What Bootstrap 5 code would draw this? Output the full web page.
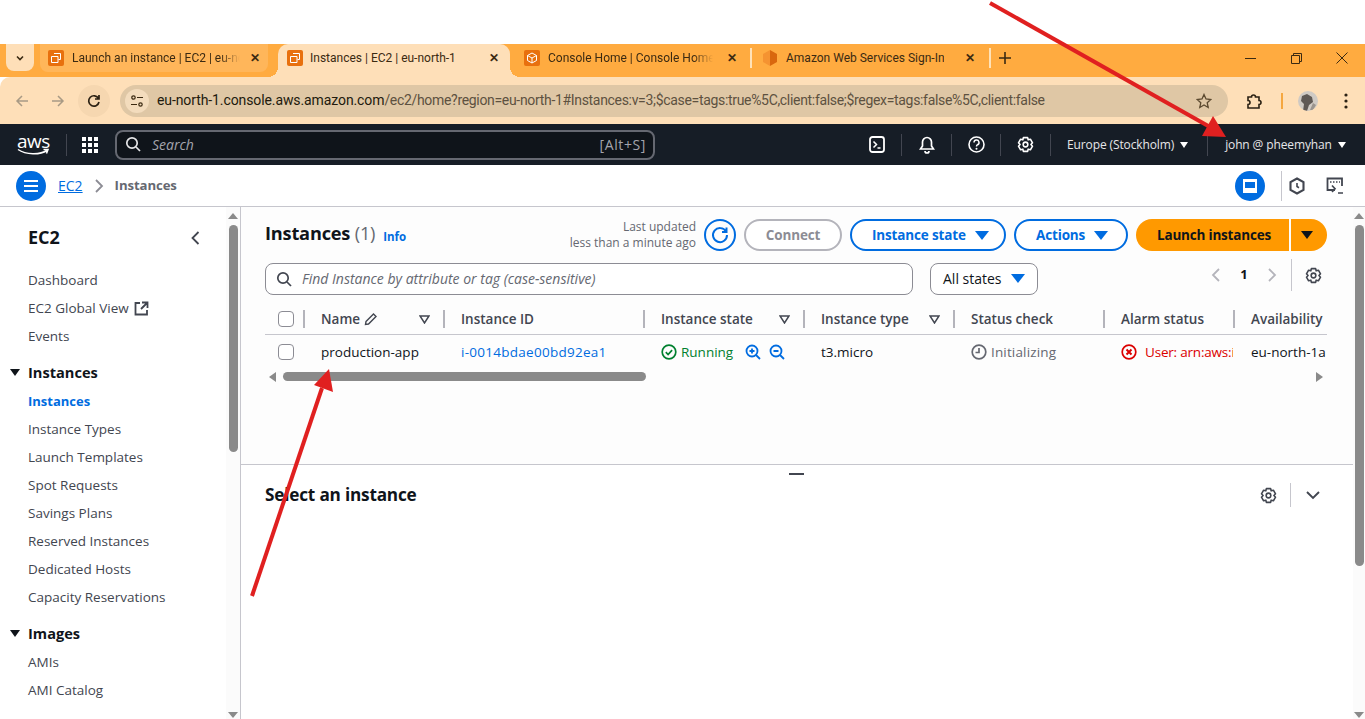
<!DOCTYPE html>
<html lang="en">
<head>
  <meta charset="UTF-8" />
  <title>Instances | EC2 | eu-north-1</title>
  <meta name="viewport" content="width=device-width, initial-scale=1.0">
  <link href="https://cdn.jsdelivr.net/npm/bootstrap@5.3.0/dist/css/bootstrap.min.css" rel="stylesheet">
  <style>
    html, body { height: 719px; overflow: hidden; }
    body { background: #fff; font-family: "Open Sans", "Liberation Sans", sans-serif; font-size: 14px; color: #0f141a; position: relative; }
    svg { display: block; flex: none; }
    .top-gap { height: 44px; background: #fff; }

    /* browser chrome */
    .tab-strip { height: 33px; background: #ffab40; font-family: Roboto, "Liberation Sans", sans-serif; font-size: 12px; color: #3b2a12; }
    .tab-menu { width: 28px; height: 27px; margin-left: 6px; margin-right: 6px; background: #fedfb8; border-radius: 0 0 8px 8px; }
    .tab-item { height: 33px; padding-bottom: 5px; white-space: nowrap; }
    .tab-hover { width: 228px; height: 28px; padding-left: 8px; padding-bottom: 0; background: #ffb65a; border-radius: 0 0 8px 8px; }
    .tab-active { position: relative; width: 232px; margin-left: 10px; padding-left: 9px; background: #fedfb8; border-radius: 10px 10px 0 0; }
    .tab-active::before, .tab-active::after { content: ""; position: absolute; bottom: 0; width: 10px; height: 10px; }
    .tab-active::before { left: -10px; background: radial-gradient(circle at 0 0, transparent 10px, #fedfb8 10px); }
    .tab-active::after { right: -10px; background: radial-gradient(circle at 100% 0, transparent 10px, #fedfb8 10px); }
    .tab-third { margin-left: 14px; }
    .tab-title { overflow: hidden; margin-left: 8px; }
    .tab-t1 { width: 168px; -webkit-mask-image: linear-gradient(to right, #000 88%, transparent); mask-image: linear-gradient(to right, #000 88%, transparent); }
    .tab-t2 { width: 162px; margin-left: 7px; }
    .tab-t3 { width: 165px; -webkit-mask-image: linear-gradient(to right, #000 88%, transparent); mask-image: linear-gradient(to right, #000 88%, transparent); }
    .tab-t4 { width: 158px; }
    .tab-fav { width: 16px; height: 16px; background: #e8700e; border-radius: 2px; }
    .tab-x { width: 14px; font-size: 12px; font-weight: 700; text-align: center; }
    .tab-x-a { margin-left: 8px; }
    .tab-x-b { margin-left: auto; margin-right: 9px; }
    .tab-x-c { margin-left: 12px; }
    .tab-x-d { margin-left: 19px; }
    .tab-sep { width: 2px; height: 20px; background: #ffe2b8; }
    .tab-sep-a { margin-left: 11px; }
    .tab-sep-b { margin-left: 12px; }
    .tab-cube { margin-left: 10px; }
    .tab-plus { margin-left: 8px; }
    .win-btn { width: 46px; }
    .toolbar { height: 47px; background: #fedfb8; color: #5c4a30; border-radius: 10px 0 0 0; padding-left: 6px; }
    .tool-btn { width: 32px; height: 32px; border-radius: 50%; }
    .tool-fwd { margin-left: 4px; }
    .tool-btn-on { background: #f6d7b0; margin-left: 4px; }
    .omnibox { width: 1108px; height: 32px; margin-left: 10px; background: #dfc7a5; border-radius: 16px; font-family: Roboto, "Liberation Sans", sans-serif; font-size: 14px; color: #5d5140; white-space: nowrap; letter-spacing: -0.32px; }
    .omni-ic { width: 24px; height: 24px; margin-left: 5px; margin-right: 8px; background: #f3dcbd; border-radius: 50%; }
    .omni-host { color: #221a0d; letter-spacing: -0.1px; }
    .tool-puzzle { margin-left: 17px; }
    .tool-sep { width: 2px; height: 16px; margin-left: 18px; background: #f5a740; }
    .avatar { width: 20px; height: 20px; margin-left: 15px; border-radius: 50%; overflow: hidden; }
    .tool-dots { margin-left: 26px; }

    /* aws nav */
    .aws-bar { height: 41px; background: #161d26; color: #fff; font-size: 12px; }
    .aws-logo { width: 32px; margin-left: 17px; margin-right: 17px; color: #fff; }
    .aws-word { font-size: 19px; line-height: 16px; letter-spacing: -0.5px; height: 15px; text-align: center; }
    .bar-sep { width: 1px; height: 22px; background: #424650; }
    .aws-grid { margin-left: 15px; margin-right: 17px; }
    .aws-search { width: 540px; height: 30px; background: #0f141a; border: 2px solid #656871; border-radius: 8px; color: #a4a4ad; font-size: 14px; padding: 0 7px 1px 8px; }
    .aws-search i { margin-left: 11px; }
    .alt-key { letter-spacing: .6px; }
    .bar-tools { margin-left: 197px; }
    .bar-ic { width: 49px; }
    .bar-ic-s { width: 48px; }
    .bar-txt { color: #e6e6e8; white-space: nowrap; letter-spacing: -0.12px; }
    .bar-region { margin-left: 16px; }
    .bar-user { margin-left: 17px; }
    .caret { display: inline-block; width: 0; height: 0; border-left: 4px solid transparent; border-right: 4px solid transparent; border-top: 6px solid currentColor; }
    .caret-a { margin-left: 6px; }
    .bar-sep-a { margin-left: 19px; }

    /* breadcrumb */
    .crumb-bar { height: 42px; border-bottom: 1px solid #c6c6cd; background: #fff; padding-left: 16px; }
    .round-btn { width: 30px; height: 30px; background: #006ce0; border-radius: 50%; }
    .crumb-link { margin-left: 12px; color: #006ce0; text-decoration: underline; font-size: 14px; }
    .crumb-chev { margin-left: 10px; margin-right: 10px; }
    .crumb-now { color: #656871; font-weight: 700; font-size: 13.2px; padding-top: 1px; letter-spacing: -0.1px; }
    .crumb-sep { width: 1px; height: 30px; background: #c6c6cd; margin-left: 16px; }
    .crumb-right { margin-right: 21px; }
    .crumb-hex { margin-left: 7px; }
    .crumb-term { margin-left: 21px; }

    /* sidebar */
    .layout { height: 512px; }
    .side-wrap { width: 241px; border-right: 1px solid #c6c6cd; background: #fff; }
    .side-nav { width: 226px; padding-left: 28px; overflow: hidden; }
    .side-title { height: 59px; padding-top: 2px; font-size: 18px; font-weight: 700; }
    .side-title svg { margin-left: auto; margin-right: 26px; }
    .side-link { height: 28px; line-height: 28px; color: #424650; font-size: 13.5px; white-space: nowrap; }
    .side-link svg { margin-left: 5px; }
    .side-on { color: #006ce0; font-weight: 700; font-size: 13px; }
    .side-head { position: relative; margin-top: 8px; height: 29px; line-height: 28px; font-size: 14.6px; font-weight: 700; }
    .side-head .caret { position: absolute; left: -18px; top: 11px; border-left-width: 5px; border-right-width: 5px; border-top-width: 7px; color: #0f141a; }
    .scroll-col { width: 14px; background: #fbfbfb; padding-top: 6px; }
    .scroll-up, .scroll-down { width: 0; height: 0; margin: 0 auto; border-left: 5px solid transparent; border-right: 5px solid transparent; }
    .scroll-up { border-bottom: 6px solid #8a8a8a; }
    .scroll-down { margin-top: auto; margin-bottom: 1px; border-top: 6px solid #8a8a8a; }
    .thumb-a, .thumb-b { width: 9px; margin: 6px auto 0; background: #8a8a8a; border-radius: 5px; }
    .thumb-a { height: 227px; }
    .thumb-b { height: 341px; }
    .main-col { width: 1112px; }

    /* instances panel */
    .pane-top { height: 258px; background: #fdfdfd; border-bottom: 1px solid #c6c6cd; padding: 12px 26px 0 24px; }
    .head-row { height: 32px; }
    .pane-title { font-size: 18.2px; font-weight: 700; margin: 0 0 2px; letter-spacing: -0.2px; }
    .pane-count { color: #656871; font-weight: 400; }
    .info-link { color: #006ce0; font-size: 11.5px; font-weight: 700; margin-left: 8px; margin-top: 4px; }
    .updated { font-size: 12px; line-height: 16px; color: #656871; text-align: right; margin-right: 8px; }
    .pill { height: 32px; border: 2px solid #006ce0; border-radius: 16px; color: #006ce0; background: #fff; font-weight: 700; font-size: 13.5px; padding: 0 20px; letter-spacing: -0.15px; white-space: nowrap; }
    .pill .caret { margin-left: 9px; border-left-width: 7px; border-right-width: 7px; border-top-width: 9px; }
    .pill-off { width: 98px; border-color: #b4b4bb; color: #8c8c94; margin-left: 8px; justify-content: center; }
    .pill-state { width: 156px; margin-left: 8px; }
    .pill-act { width: 114px; margin-left: 8px; }
    .refresh { width: 32px; height: 32px; border: 2px solid #006ce0; border-radius: 50%; }
    .launch { width: 153px; height: 32px; margin-left: 8px; padding-left: 3px; background: #ff9900; border-radius: 16px 0 0 16px; color: #0f141a; font-weight: 700; font-size: 13.5px; letter-spacing: -0.2px; }
    .launch-drop { width: 36px; height: 32px; margin-left: 2px; background: #ff9900; border-radius: 0 16px 16px 0; color: #0f141a; }
    .launch-drop .caret { border-left-width: 6px; border-right-width: 6px; border-top-width: 8px; margin-right: 4px; }
    .filter-row { margin-top: 12px; height: 32px; }
    .find-box { width: 648px; height: 32px; border: 1px solid #8c8c94; border-radius: 8px; background: #fff; padding-left: 10px; padding-bottom: 1px; color: #656871; font-style: italic; font-size: 14px; }
    .find-box span { margin-left: 10px; }
    .state-box { width: 108px; height: 32px; margin-left: 17px; border: 1px solid #8c8c94; border-radius: 8px; background: #fff; color: #0f141a; padding-left: 12px; padding-bottom: 1px; }
    .state-box .caret { margin-left: 9px; color: #006ce0; border-left-width: 7px; border-right-width: 7px; border-top-width: 9px; }
    .pager { margin-left: auto; height: 32px; margin-top: -8px; padding-right: 5px; }
    .pager-num { font-weight: 700; width: 36px; text-align: center; font-size: 13px; }
    .pager-sep { width: 1px; height: 32px; background: #c6c6cd; margin-left: 13px; margin-right: 13px; }

    /* instance rows */
    .ins-table { width: 1062px; table-layout: fixed; border-collapse: collapse; margin-top: 10px; }
    .ins-table th { height: 29px; border-bottom: 1px solid #c6c6cd; font-weight: 600; color: #424650; font-size: 13.5px; padding: 0; white-space: nowrap; overflow: hidden; }
    .ins-table td { height: 36px; padding: 0; white-space: nowrap; overflow: hidden; font-size: 13.5px; }
    .cell-in { height: 18px; padding-left: 16px; border-left: 2px solid #b4b4bb; }
    .cell-td { padding-left: 18px; }
    .tick { width: 16px; height: 16px; border: 1px solid #8c8c94; border-radius: 4px; background: #fff; margin-left: 13px; }
    .th-filter { margin-left: auto; margin-right: 13px; }
    .id-link { color: #006ce0; letter-spacing: .27px; }
    .ok { color: #00802f; }
    .dim { color: #656871; letter-spacing: .15px; }
    .bad { color: #db0000; }
    .zoom-a { margin-left: 12px; }
    .zoom-b { margin-left: 8px; }
    .clip-alarm { display: block; overflow: hidden; width: 88px; letter-spacing: -0.2px; }
    .hscroll { height: 9px; margin-top: 2px; }
    .hscroll-thumb { width: 363px; height: 9px; background: #8a8a8a; border-radius: 5px; margin-left: 7px; }
    .hscroll-l { width: 0; height: 0; margin-left: 4px; border-top: 5px solid transparent; border-bottom: 5px solid transparent; border-right: 7px solid #8a8a8a; }
    .hscroll-r { width: 0; height: 0; margin-left: auto; margin-right: 4px; border-top: 5px solid transparent; border-bottom: 5px solid transparent; border-left: 7px solid #8a8a8a; }

    /* lower panel */
    .pane-low { position: relative; padding: 18px 33px 0 24px; background: #fff; }
    .drag-dash { position: absolute; top: 8px; left: 548px; width: 15px; height: 2px; background: #424650; }
    .low-title { font-size: 17.2px; font-weight: 700; margin: 0; letter-spacing: -0.2px; }
    .low-sep { width: 1px; height: 24px; background: #c6c6cd; margin: 0 15px 0 13px; }

    /* red arrows from the screenshot */
    .mark-up { position: absolute; left: 0; top: 0; pointer-events: none; }
  </style>
</head>
<body>
  <div class="top-gap"></div>

  <div class="tab-strip d-flex">
    <div class="tab-menu d-flex align-items-center justify-content-center">
      <svg width="10" height="10" viewBox="0 0 10 10"><path d="M2 3.500 5 6.500 8 3.500" fill="none" stroke="#3b2a12" stroke-width="1.600"/></svg>
    </div>
    <div class="tab-item tab-hover d-flex align-items-center">
      <span class="tab-fav d-flex align-items-center justify-content-center"><svg width="12" height="12" viewBox="0 0 12 12"><path d="M4 1.500h6.500v6h-2M1.500 4.500h6.500v6h-6.500z" fill="none" stroke="#fff" stroke-width="1"/></svg></span>
      <span class="tab-title tab-t1">Launch an instance | EC2 | eu-north-1</span>
      <span class="tab-x tab-x-a">✕</span>
    </div>
    <div class="tab-item tab-active d-flex align-items-center">
      <span class="tab-fav d-flex align-items-center justify-content-center"><svg width="12" height="12" viewBox="0 0 12 12"><path d="M4 1.500h6.500v6h-2M1.500 4.500h6.500v6h-6.500z" fill="none" stroke="#fff" stroke-width="1"/></svg></span>
      <span class="tab-title tab-t2">Instances | EC2 | eu-north-1</span>
      <span class="tab-x tab-x-b">✕</span>
    </div>
    <div class="tab-item tab-third d-flex align-items-center">
      <span class="tab-fav d-flex align-items-center justify-content-center"><svg width="12" height="12" viewBox="0 0 12 12"><path d="M6 1 10.500 3.500v5L6 11 1.500 8.500v-5zM1.500 3.500 6 6l4.500-2.500M6 6v5" fill="none" stroke="#fff" stroke-width="1"/></svg></span>
      <span class="tab-title tab-t3">Console Home | Console Home</span>
      <span class="tab-x tab-x-c">✕</span>
    </div>
    <div class="tab-item d-flex align-items-center">
      <span class="tab-sep tab-sep-a"></span>
      <svg class="tab-cube" width="16" height="18" viewBox="0 0 16 18"><path d="M8 1 15 5v8l-7 4z" fill="#d9670e"/><path d="M8 1 1 5v8l7 4z" fill="#f59331"/></svg>
      <span class="tab-title tab-t4">Amazon Web Services Sign-In</span>
      <span class="tab-x tab-x-d">✕</span>
      <span class="tab-sep tab-sep-b"></span>
      <svg class="tab-plus" width="12" height="12" viewBox="0 0 12 12"><path d="M6 0v12M0 6h12" stroke="#3b2a12" stroke-width="1.600"/></svg>
    </div>
    <div class="tab-item d-flex ms-auto">
      <div class="win-btn d-flex align-items-center justify-content-center"><svg width="11" height="11" viewBox="0 0 11 11"><path d="M0 5.500h11" stroke="#3b2a12"/></svg></div>
      <div class="win-btn d-flex align-items-center justify-content-center"><svg width="11" height="11" viewBox="0 0 11 11"><path d="M.5 2.500h8v8h-8zM2.500 2.500v-2h8v8h-2" fill="none" stroke="#3b2a12"/></svg></div>
      <div class="win-btn d-flex align-items-center justify-content-center"><svg width="12" height="12" viewBox="0 0 12 12"><path d="M.5.500l11 11M11.500.500l-11 11" stroke="#3b2a12"/></svg></div>
    </div>
  </div>

  <div class="toolbar d-flex align-items-center">
    <div class="tool-btn d-flex align-items-center justify-content-center">
      <svg width="14" height="14" viewBox="0 0 14 14"><path d="M13 7H2M7 2 2 7l5 5" fill="none" stroke="#a89a85" stroke-width="1.500"/></svg>
    </div>
    <div class="tool-btn tool-fwd d-flex align-items-center justify-content-center">
      <svg width="14" height="14" viewBox="0 0 14 14"><path d="M1 7h11M7 2l5 5-5 5" fill="none" stroke="#a89a85" stroke-width="1.500"/></svg>
    </div>
    <div class="tool-btn tool-btn-on d-flex align-items-center justify-content-center">
      <svg width="14" height="14" viewBox="0 0 14 14"><path d="M11.500 4.500A5.200 5.200 0 1 0 12 8M12 1v4H8" fill="none" stroke="#2b2113" stroke-width="1.700"/></svg>
    </div>
    <div class="omnibox d-flex align-items-center">
      <span class="omni-ic d-flex align-items-center justify-content-center"><svg width="14" height="12" viewBox="0 0 14 12"><circle cx="3.500" cy="2.500" r="1.700" fill="none" stroke="#3b2a12" stroke-width="1.200"/><path d="M7 2.500h6M1 9.500h6" stroke="#3b2a12" stroke-width="1.200"/><circle cx="10.500" cy="9.500" r="1.700" fill="none" stroke="#3b2a12" stroke-width="1.200"/></svg></span>
      <span><span class="omni-host">eu-north-1.console.aws.amazon.com</span>/ec2/home?region=eu-north-1#Instances:v=3;$case=tags:true%5C,client:false;$regex=tags:false%5C,client:false</span>
      <svg class="ms-auto me-3" width="16" height="16" viewBox="0 0 16 16"><path d="M8 1.500 10 6l4.800.500-3.600 3.200 1 4.800L8 12l-4.200 2.500 1-4.800L1.200 6.500 6 6z" fill="none" stroke="#5c4a30" stroke-width="1.300"/></svg>
    </div>
    <svg class="tool-puzzle" width="18" height="18" viewBox="0 0 18 18"><path d="M3 5h3.500a2 2 0 0 1 4 0H14v3.500a2 2 0 0 1 0 4V16H3v-3.500a2 2 0 0 0 0-4z" fill="none" stroke="#2b2113" stroke-width="1.600"/></svg>
    <span class="tool-sep"></span>
    <span class="avatar"><svg width="20" height="20" viewBox="0 0 20 20"><rect width="20" height="20" fill="#cfcac4"/><path d="M4 5l5-2 5 3 1 5-4 3-2 6H5l1-7-3-3z" fill="#5f5955"/><path d="M15 12l3 2-3 5h-3z" fill="#9a948e"/></svg></span>
    <svg class="tool-dots" width="4" height="16" viewBox="0 0 4 16"><circle cx="2" cy="2" r="1.600" fill="#2b2113"/><circle cx="2" cy="8" r="1.600" fill="#2b2113"/><circle cx="2" cy="14" r="1.600" fill="#2b2113"/></svg>
  </div>

  <div class="aws-bar d-flex align-items-center">
    <div class="aws-logo">
      <div class="aws-word">aws</div>
      <svg width="32" height="8" viewBox="0 0 32 8"><path d="M1 1.500C9 7 23 7 30 2.500M26.500 1.500l4.500 0-1.500 4" fill="none" stroke="#fff" stroke-width="1.500"/></svg>
    </div>
    <span class="bar-sep"></span>
    <svg class="aws-grid" width="16" height="16" viewBox="0 0 16 16" fill="#fff"><rect width="4" height="4"/><rect x="6" width="4" height="4"/><rect x="12" width="4" height="4"/><rect y="6" width="4" height="4"/><rect x="6" y="6" width="4" height="4"/><rect x="12" y="6" width="4" height="4"/><rect y="12" width="4" height="4"/><rect x="6" y="12" width="4" height="4"/><rect x="12" y="12" width="4" height="4"/></svg>
    <div class="aws-search d-flex align-items-center">
      <svg width="16" height="16" viewBox="0 0 16 16"><circle cx="7" cy="7" r="5.200" fill="none" stroke="#e6e6e8" stroke-width="1.700"/><path d="M11 11l4 4" stroke="#e6e6e8" stroke-width="1.700"/></svg>
      <i>Search</i>
      <span class="alt-key ms-auto">[Alt+S]</span>
    </div>
    <div class="bar-tools d-flex align-items-center">
      <div class="bar-ic d-flex justify-content-center"><svg width="16" height="17" viewBox="0 0 16 17"><rect x="1" y="1" width="14" height="15" rx="2.500" fill="none" stroke="#fff" stroke-width="1.800"/><path d="M4.500 5.500l3 3-3 3M8.500 12h3" fill="none" stroke="#fff" stroke-width="1.500"/></svg></div>
      <span class="bar-sep"></span>
      <div class="bar-ic d-flex justify-content-center"><svg width="16" height="18" viewBox="0 0 16 18"><path d="M8 1.500a4.500 4.500 0 0 0-4.500 4.500v4L1.500 13h13l-2-3V6A4.500 4.500 0 0 0 8 1.500zM6 15a2 2 0 0 0 4 0" fill="none" stroke="#fff" stroke-width="1.700"/></svg></div>
      <span class="bar-sep"></span>
      <div class="bar-ic-s d-flex justify-content-center"><svg width="17" height="17" viewBox="0 0 17 17"><circle cx="8.500" cy="8.500" r="7.500" fill="none" stroke="#fff" stroke-width="1.600"/><path d="M6 6.500a2.500 2.500 0 1 1 3.500 2.300c-.7.300-1 .8-1 1.700" fill="none" stroke="#fff" stroke-width="1.500"/><circle cx="8.500" cy="12.800" r="1" fill="#fff"/></svg></div>
      <span class="bar-sep"></span>
      <div class="bar-ic d-flex justify-content-center"><svg width="17" height="17" viewBox="0 0 16 16"><path d="M6 1.500h4l.5 2.100 2.100-.6 2 3.400-1.500 1.600 1.500 1.600-2 3.400-2.100-.6-.5 2.100H6l-.5-2.100-2.100.6-2-3.400L2.900 8 1.400 6.400l2-3.400 2.100.6z" fill="none" stroke="#fff" stroke-width="1.500" stroke-linejoin="round"/><circle cx="8" cy="8" r="2.200" fill="none" stroke="#fff" stroke-width="1.500"/></svg></div>
      <span class="bar-sep"></span>
      <span class="bar-txt bar-region">Europe (Stockholm)</span><span class="caret caret-a"></span>
      <span class="bar-sep bar-sep-a"></span>
      <span class="bar-txt bar-user">john @ pheemyhan</span><span class="caret caret-a"></span>
    </div>
  </div>

  <div class="crumb-bar d-flex align-items-center">
    <div class="round-btn d-flex align-items-center justify-content-center">
      <svg width="16" height="12" viewBox="0 0 16 12"><path d="M1 1h14M1 6h14M1 11h14" stroke="#fff" stroke-width="2"/></svg>
    </div>
    <a class="crumb-link" href="#">EC2</a>
    <svg class="crumb-chev" width="12" height="14" viewBox="0 0 12 14"><path d="M3 1l6 6-6 6" fill="none" stroke="#8c8c94" stroke-width="1.800"/></svg>
    <span class="crumb-now">Instances</span>
    <div class="d-flex align-items-center ms-auto crumb-right">
      <div class="round-btn d-flex align-items-center justify-content-center">
        <svg width="14" height="14" viewBox="0 0 14 14"><rect width="14" height="14" fill="#fff"/><rect x="2" y="3" width="10" height="6" fill="#006ce0"/></svg>
      </div>
      <span class="crumb-sep"></span>
      <svg class="crumb-hex" width="16" height="18" viewBox="0 0 16 18"><path d="M8 1.500 14.500 5.200v7.600L8 16.500 1.500 12.800V5.200z" fill="none" stroke="#424650" stroke-width="2.100"/><path d="M8 6v3.500l2 1.200" fill="none" stroke="#424650" stroke-width="1.600"/></svg>
      <svg class="crumb-term" width="18" height="18" viewBox="0 0 18 18"><path d="M9 13H1.500V1.500h14.500V9" fill="none" stroke="#424650" stroke-width="1.800"/><path d="M4 5h1.500M7 5h1.500M10 5h1.500M13 5h1M6 8.500l3 3.200-3 3.200M12 16h5" fill="none" stroke="#424650" stroke-width="1.700"/></svg>
    </div>
  </div>

  <div class="layout d-flex">
    <div class="side-wrap d-flex">
      <nav class="side-nav">
        <div class="side-title d-flex align-items-center">EC2
          <svg width="10" height="14" viewBox="0 0 10 14"><path d="M8.500 1 2.500 7l6 6" fill="none" stroke="#424650" stroke-width="1.800"/></svg>
        </div>
        <div class="side-link">Dashboard</div>
        <div class="side-link d-flex align-items-center">EC2 Global View
          <svg width="15" height="15" viewBox="0 0 15 15"><path d="M6 2H1.500v11.500H13V9M8 1.500h5.500V7M13 2 7 8" fill="none" stroke="#424650" stroke-width="1.800"/></svg>
        </div>
        <div class="side-link">Events</div>
        <div class="side-head"><span class="caret"></span>Instances</div>
        <div class="side-link side-on">Instances</div>
        <div class="side-link">Instance Types</div>
        <div class="side-link">Launch Templates</div>
        <div class="side-link">Spot Requests</div>
        <div class="side-link">Savings Plans</div>
        <div class="side-link">Reserved Instances</div>
        <div class="side-link">Dedicated Hosts</div>
        <div class="side-link">Capacity Reservations</div>
        <div class="side-head"><span class="caret"></span>Images</div>
        <div class="side-link">AMIs</div>
        <div class="side-link">AMI Catalog</div>
      </nav>
      <div class="scroll-col d-flex flex-column">
        <div class="scroll-up"></div>
        <div class="thumb-a"></div>
        <div class="scroll-down"></div>
      </div>
    </div>

    <div class="main-col">
      <div class="pane-top">
        <div class="head-row d-flex align-items-center">
          <h1 class="pane-title">Instances <span class="pane-count">(1)</span></h1>
          <a class="info-link text-decoration-none" href="#">Info</a>
          <div class="updated ms-auto">Last updated<br>less than a minute ago</div>
          <div class="refresh d-flex align-items-center justify-content-center">
            <svg width="20" height="20" viewBox="0 0 20 20"><path d="M16 6.500A7 7 0 1 0 17 10M16.500 2.500v4.500H12" fill="none" stroke="#006ce0" stroke-width="2"/></svg>
          </div>
          <div class="pill pill-off d-flex align-items-center">Connect</div>
          <div class="pill pill-state d-flex align-items-center">Instance state<span class="caret"></span></div>
          <div class="pill pill-act d-flex align-items-center">Actions<span class="caret"></span></div>
          <div class="launch d-flex align-items-center justify-content-center">Launch instances</div>
          <div class="launch-drop d-flex align-items-center justify-content-center"><span class="caret"></span></div>
        </div>

        <div class="filter-row d-flex align-items-center">
          <div class="find-box d-flex align-items-center">
            <svg width="16" height="16" viewBox="0 0 16 16"><circle cx="7" cy="7" r="5.200" fill="none" stroke="#424650" stroke-width="1.700"/><path d="M11 11l4 4" stroke="#424650" stroke-width="1.700"/></svg>
            <span>Find Instance by attribute or tag (case-sensitive)</span>
          </div>
          <div class="state-box d-flex align-items-center">All states<span class="caret"></span></div>
          <div class="pager d-flex align-items-center">
            <svg width="12" height="16" viewBox="0 0 12 16"><path d="M9 2 3 8l6 6" fill="none" stroke="#b4b4bb" stroke-width="1.800"/></svg>
            <span class="pager-num mx-1">1</span>
            <svg width="12" height="16" viewBox="0 0 12 16"><path d="M3 2l6 6-6 6" fill="none" stroke="#b4b4bb" stroke-width="1.800"/></svg>
            <span class="pager-sep"></span>
            <svg width="17" height="17" viewBox="0 0 16 16"><path d="M6 1.500h4l.5 2.100 2.100-.6 2 3.400-1.500 1.600 1.500 1.600-2 3.400-2.100-.6-.5 2.100H6l-.5-2.100-2.100.6-2-3.400L2.900 8 1.400 6.400l2-3.400 2.100.6z" fill="none" stroke="#424650" stroke-width="1.500" stroke-linejoin="round"/><circle cx="8" cy="8" r="2.200" fill="none" stroke="#424650" stroke-width="1.500"/></svg>
          </div>
        </div>

        <table class="ins-table">
          <colgroup><col width="38"><col width="140"><col width="200"><col width="160"><col width="150"><col width="150"><col width="130"><col width="94"></colgroup>
          <thead>
            <tr>
              <th><div class="tick"></div></th>
              <th><div class="cell-in d-flex align-items-center">Name
                <svg class="ms-1" width="14" height="14" viewBox="0 0 14 14"><path d="M2 9.500 9.500 2l2.500 2.500L4.500 12 1.500 12.500z" fill="none" stroke="#424650" stroke-width="1.400"/></svg>
                <svg class="th-filter" width="11" height="9" viewBox="0 0 11 9"><path d="M1 1h9L5.500 8z" fill="none" stroke="#424650" stroke-width="1.500"/></svg>
              </div></th>
              <th><div class="cell-in d-flex align-items-center">Instance ID</div></th>
              <th><div class="cell-in d-flex align-items-center">Instance state
                <svg class="th-filter" width="11" height="9" viewBox="0 0 11 9"><path d="M1 1h9L5.500 8z" fill="none" stroke="#424650" stroke-width="1.500"/></svg>
              </div></th>
              <th><div class="cell-in d-flex align-items-center">Instance type
                <svg class="th-filter" width="11" height="9" viewBox="0 0 11 9"><path d="M1 1h9L5.500 8z" fill="none" stroke="#424650" stroke-width="1.500"/></svg>
              </div></th>
              <th><div class="cell-in d-flex align-items-center">Status check</div></th>
              <th><div class="cell-in d-flex align-items-center">Alarm status</div></th>
              <th><div class="cell-in d-flex align-items-center">Availability</div></th>
            </tr>
          </thead>
          <tbody>
            <tr>
              <td><div class="tick"></div></td>
              <td><div class="cell-td">production-app</div></td>
              <td><div class="cell-td"><a class="id-link text-decoration-none" href="#">i-0014bdae00bd92ea1</a></div></td>
              <td><div class="cell-td d-flex align-items-center ok">
                <svg class="me-1" width="16" height="16" viewBox="0 0 16 16"><circle cx="8" cy="8" r="6.800" fill="none" stroke="#00802f" stroke-width="1.700"/><path d="M4.800 8.200l2.300 2.300 4-4.300" fill="none" stroke="#00802f" stroke-width="1.700"/></svg>
                Running
                <svg class="zoom-a" width="16" height="16" viewBox="0 0 16 16"><circle cx="7" cy="7" r="5.500" fill="none" stroke="#006ce0" stroke-width="1.800"/><path d="M11 11l4 4M4.500 7h5M7 4.500v5" fill="none" stroke="#006ce0" stroke-width="1.800"/></svg>
                <svg class="zoom-b" width="16" height="16" viewBox="0 0 16 16"><circle cx="7" cy="7" r="5.500" fill="none" stroke="#006ce0" stroke-width="1.800"/><path d="M11 11l4 4M4.500 7h5" fill="none" stroke="#006ce0" stroke-width="1.800"/></svg>
              </div></td>
              <td><div class="cell-td">t3.micro</div></td>
              <td><div class="cell-td d-flex align-items-center dim">
                <svg class="me-1" width="16" height="16" viewBox="0 0 16 16"><circle cx="8" cy="8" r="6.800" fill="none" stroke="#656871" stroke-width="1.700"/><path d="M8 4v4.500H4.500" fill="none" stroke="#656871" stroke-width="1.700"/></svg>
                Initializing
              </div></td>
              <td><div class="cell-td d-flex align-items-center bad">
                <svg class="me-2" width="16" height="16" viewBox="0 0 16 16"><circle cx="8" cy="8" r="6.800" fill="none" stroke="#db0000" stroke-width="1.700"/><path d="M5.500 5.500l5 5M10.500 5.500l-5 5" stroke="#db0000" stroke-width="2"/></svg>
                <span class="clip-alarm">User: arn:aws:iam</span>
              </div></td>
              <td><div class="cell-td">eu-north-1a</div></td>
            </tr>
          </tbody>
        </table>

        <div class="hscroll d-flex align-items-center">
          <span class="hscroll-l"></span>
          <span class="hscroll-thumb"></span>
          <span class="hscroll-r"></span>
        </div>
      </div>

      <div class="pane-low">
        <span class="drag-dash"></span>
        <div class="d-flex align-items-center">
          <h2 class="low-title">Select an instance</h2>
          <svg class="ms-auto" width="17" height="17" viewBox="0 0 16 16"><path d="M6 1.500h4l.5 2.100 2.100-.6 2 3.400-1.500 1.600 1.500 1.600-2 3.400-2.100-.6-.5 2.100H6l-.5-2.100-2.100.6-2-3.400L2.900 8 1.400 6.400l2-3.400 2.100.6z" fill="none" stroke="#424650" stroke-width="1.500" stroke-linejoin="round"/><circle cx="8" cy="8" r="2.200" fill="none" stroke="#424650" stroke-width="1.500"/></svg>
          <span class="low-sep"></span>
          <svg width="14" height="10" viewBox="0 0 14 10"><path d="M1 2l6 6 6-6" fill="none" stroke="#424650" stroke-width="1.900"/></svg>
        </div>
      </div>
    </div>

    <div class="scroll-col d-flex flex-column flex-grow-1">
      <div class="scroll-up"></div>
      <div class="thumb-b"></div>
      <div class="scroll-down"></div>
    </div>
  </div>

  <svg class="mark-up" width="1365" height="719" viewBox="0 0 1365 719">
    <path d="M990 3 1210 127" stroke="#e02020" stroke-width="4" fill="none"/>
    <path d="M1226 137 1202 136 1213 116z" fill="#e02020"/>
    <path d="M252 596 322 388" stroke="#e02020" stroke-width="4" fill="none"/>
    <path d="M329 369 333 392 314 385z" fill="#e02020"/>
  </svg>

  <script src="https://cdn.jsdelivr.net/npm/bootstrap@5.3.0/dist/js/bootstrap.bundle.min.js"></script>
</body>
</html>
